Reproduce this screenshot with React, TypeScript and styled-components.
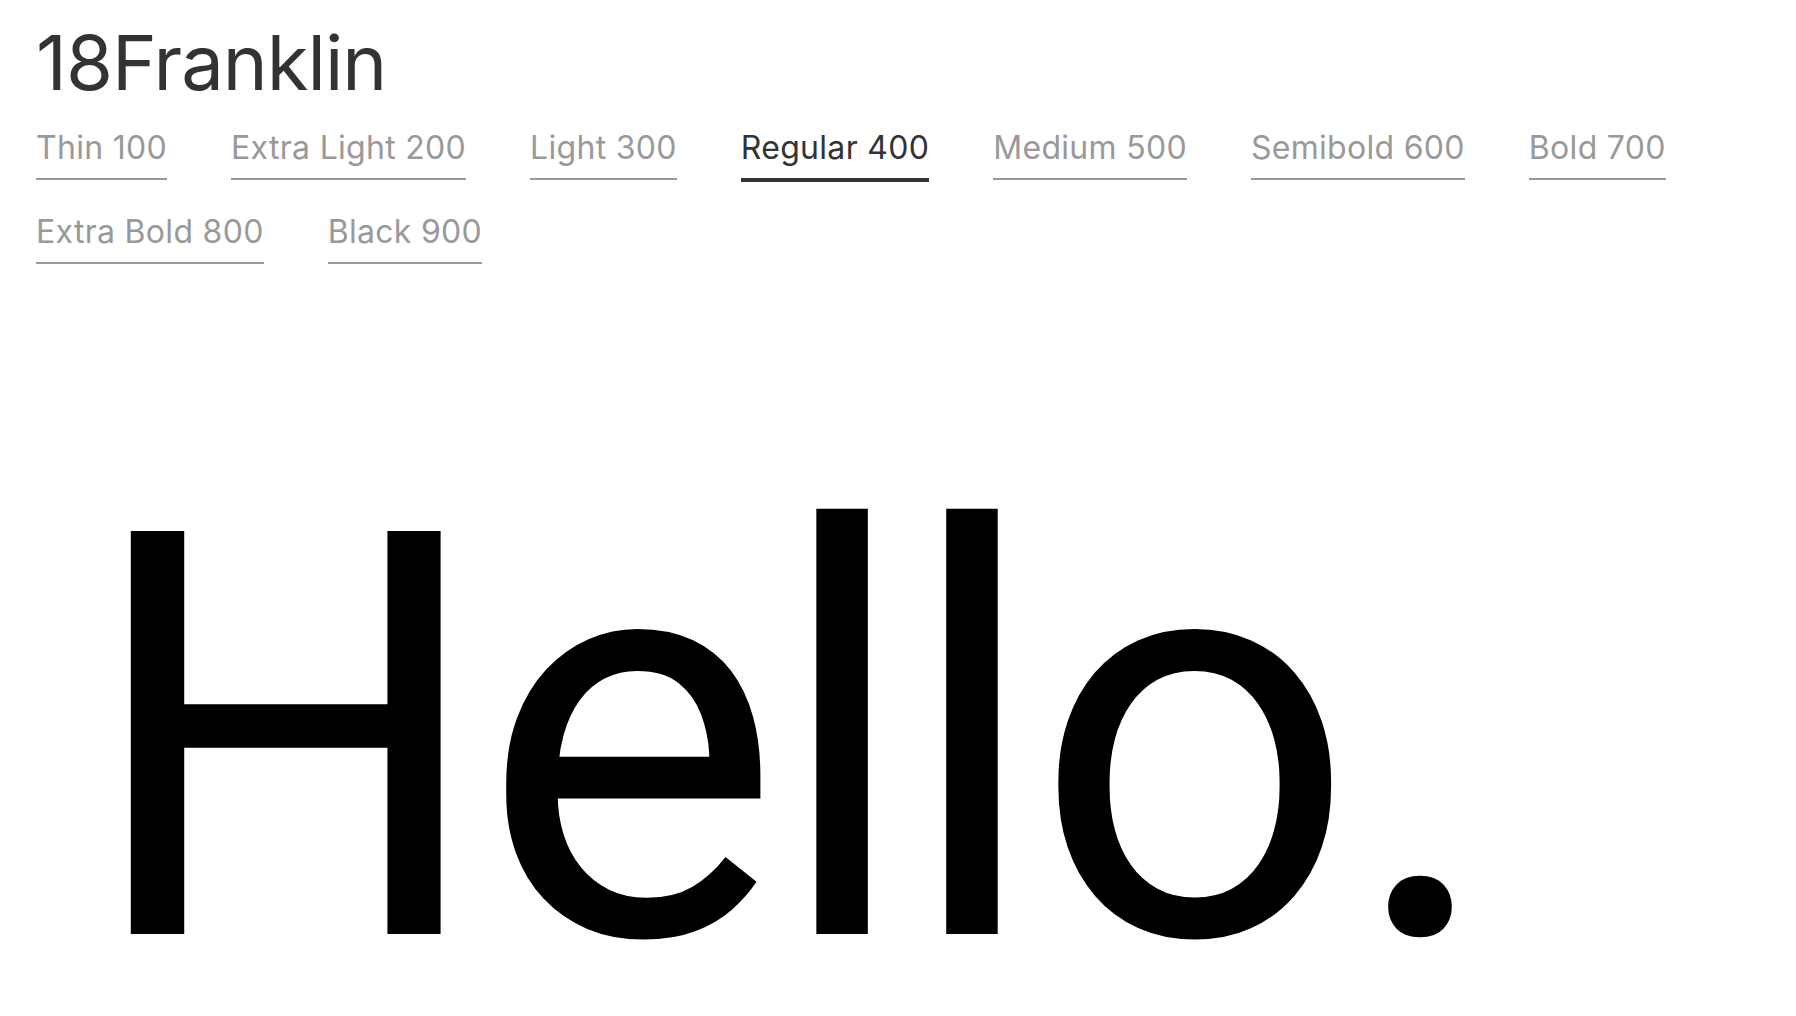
import React, { useState } from "react";
import styled, { createGlobalStyle } from "styled-components";

const GlobalStyle = createGlobalStyle`
  html, body {
    margin: 0;
    padding: 0;
    background: #ffffff;
  }
  body {
    font-family: Inter, "Noto Sans", sans-serif;
  }
`;

const Page = styled.div`
  display: flex;
  flex-direction: column;
  width: 100%;
  height: 100vh;
  padding: 24px 36px 0 36px;
  box-sizing: border-box;
  overflow: hidden;
`;

const Title = styled.h1`
  margin: 0;
  font-family: Inter, sans-serif;
  font-weight: 400;
  font-size: 76px;
  line-height: 76px;
  letter-spacing: -1px;
  color: #333333;
`;

const Tabs = styled.div`
  display: flex;
  flex-wrap: wrap;
  align-items: flex-start;
  column-gap: 64px;
  row-gap: 30px;
  margin-top: 28px;
`;

const Tab = styled.button<{ $active?: boolean }>`
  display: block;
  padding: 0 0 10px 0;
  margin: 0;
  background: none;
  border: none;
  border-bottom: ${(p) => (p.$active ? "4px solid #333333" : "2px solid #999999")};
  font-family: Inter, sans-serif;
  font-weight: 400;
  font-size: 32px;
  line-height: 40px;
  letter-spacing: 0.3px;
  color: ${(p) => (p.$active ? "#333333" : "#999999")};
  cursor: pointer;
  white-space: nowrap;
`;

const Stage = styled.div`
  display: flex;
  padding-left: 48px;
  margin-top: 236px;
`;

const Hello = styled.div`
  font-family: Roboto, sans-serif;
  font-weight: 400;
  font-size: 567px;
  line-height: 480px;
  letter-spacing: -8px;
  color: #000000;
`;

const weights = [
  "Thin 100",
  "Extra Light 200",
  "Light 300",
  "Regular 400",
  "Medium 500",
  "Semibold 600",
  "Bold 700",
  "Extra Bold 800",
  "Black 900",
];

const App = () => {
  const [active, setActive] = useState("Regular 400");
  return (
    <>
      <GlobalStyle />
      <Page>
        <Title>18Franklin</Title>
        <Tabs>
          {weights.map((w) => (
            <Tab key={w} $active={w === active} onClick={() => setActive(w)}>
              {w}
            </Tab>
          ))}
        </Tabs>
        <Stage>
          <Hello>Hello.</Hello>
        </Stage>
      </Page>
    </>
  );
};

export default App;
